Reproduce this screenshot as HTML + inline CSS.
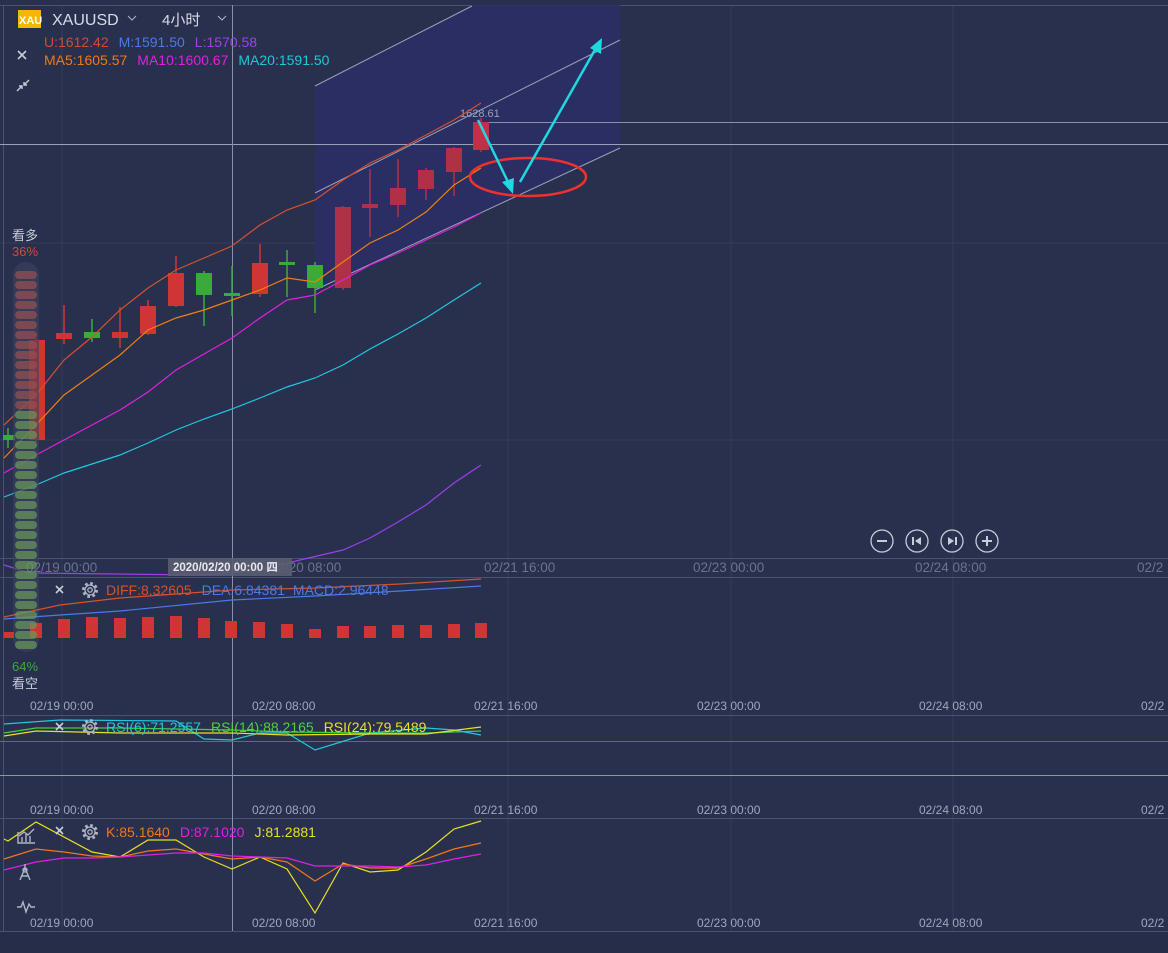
<!DOCTYPE html>
<html><head><meta charset="utf-8"><style>
html,body{margin:0;padding:0;background:#28304e;}
body{width:1168px;height:953px;overflow:hidden;position:relative;font-family:"Liberation Sans","Noto Sans CJK SC",sans-serif;}
svg{position:absolute;left:0;top:0}
text{font-family:"Liberation Sans","Noto Sans CJK SC",sans-serif;}
</style></head><body>
<svg width="1168" height="953" viewBox="0 0 1168 953">
<defs>
<g id="gear"><circle r="6.5" fill="none" stroke="#b0b4c4" stroke-width="3" stroke-dasharray="2.6 2.5"/><circle r="5" fill="none" stroke="#b0b4c4" stroke-width="1.3"/><circle r="2.2" fill="none" stroke="#b0b4c4" stroke-width="1.3"/></g>
</defs>
<rect x="0" y="0" width="1168" height="953" fill="#28304e"/>
<rect x="0" y="931" width="1168" height="22" fill="#262d48"/>
<g stroke="#333b5a" stroke-width="1">
<line x1="62" y1="5" x2="62" y2="931"/><line x1="508" y1="5" x2="508" y2="931"/>
<line x1="731" y1="5" x2="731" y2="931"/><line x1="953" y1="5" x2="953" y2="931"/>
<line x1="0" y1="243" x2="1168" y2="243"/><line x1="0" y1="440" x2="1168" y2="440"/>
</g>
<g stroke="#4a5270" stroke-width="1">
<line x1="0" y1="5.5" x2="1168" y2="5.5"/>
<line x1="0" y1="558.5" x2="1168" y2="558.5"/>
<line x1="0" y1="577.5" x2="1168" y2="577.5"/>
<line x1="0" y1="715.5" x2="1168" y2="715.5"/>
<line x1="0" y1="818.5" x2="1168" y2="818.5"/>
<line x1="0" y1="931.5" x2="1168" y2="931.5"/>
<line x1="3.5" y1="5" x2="3.5" y2="931"/>
</g>
<polygon points="315,86 315,290 620,148 620,5 472,5" fill="#2a2f66" opacity="0.9"/>
<g stroke="#9aa0b8" stroke-width="1" fill="none">
<line x1="315" y1="86" x2="472" y2="6"/>
<line x1="315" y1="193" x2="620" y2="40"/>
<line x1="315" y1="290" x2="620" y2="148"/>
</g>
<line x1="480" y1="122.5" x2="1168" y2="122.5" stroke="#8a90a8"/>
<line x1="0" y1="144.5" x2="1168" y2="144.5" stroke="#9aa0b8"/>
<line x1="232.5" y1="5" x2="232.5" y2="931" stroke="#8a90a8"/>
<g stroke-width="1.5">
<line x1="8" y1="428" x2="8" y2="448" stroke="#3aaa3a"/><rect x="3" y="435" width="12" height="5" fill="#3aaa3a"/>
<line x1="36" y1="338" x2="36" y2="442" stroke="#d03535"/><rect x="29" y="340" width="16" height="100" fill="#d03535"/>
<line x1="64" y1="305" x2="64" y2="344" stroke="#d03535"/><rect x="56" y="333" width="16" height="6" fill="#d03535"/>
<line x1="92" y1="319" x2="92" y2="342" stroke="#3aaa3a"/><rect x="84" y="332" width="16" height="6" fill="#3aaa3a"/>
<line x1="120" y1="307" x2="120" y2="348" stroke="#d03535"/><rect x="112" y="332" width="16" height="6" fill="#d03535"/>
<line x1="148" y1="300" x2="148" y2="335" stroke="#d03535"/><rect x="140" y="306" width="16" height="28" fill="#d03535"/>
<line x1="176" y1="256" x2="176" y2="307" stroke="#d03535"/><rect x="168" y="273" width="16" height="33" fill="#d03535"/>
<line x1="204" y1="271" x2="204" y2="326" stroke="#3aaa3a"/><rect x="196" y="273" width="16" height="22" fill="#3aaa3a"/>
<line x1="232" y1="266" x2="232" y2="316" stroke="#3aaa3a"/><rect x="224" y="293" width="16" height="3" fill="#3aaa3a"/>
<line x1="260" y1="244" x2="260" y2="297" stroke="#d03535"/><rect x="252" y="263" width="16" height="31" fill="#d03535"/>
<line x1="287" y1="250" x2="287" y2="297" stroke="#3aaa3a"/><rect x="279" y="262" width="16" height="3" fill="#3aaa3a"/>
<line x1="315" y1="262" x2="315" y2="313" stroke="#3aaa3a"/><rect x="307" y="265" width="16" height="23" fill="#3aaa3a"/>
<line x1="343" y1="206" x2="343" y2="290" stroke="#b03048"/><rect x="335" y="207" width="16" height="81" fill="#b03048"/>
<line x1="370" y1="169" x2="370" y2="237" stroke="#b03048"/><rect x="362" y="204" width="16" height="4" fill="#b03048"/>
<line x1="398" y1="159" x2="398" y2="217" stroke="#b03048"/><rect x="390" y="188" width="16" height="17" fill="#b03048"/>
<line x1="426" y1="168" x2="426" y2="200" stroke="#b03048"/><rect x="418" y="170" width="16" height="19" fill="#b03048"/>
<line x1="454" y1="147" x2="454" y2="196" stroke="#b03048"/><rect x="446" y="148" width="16" height="24" fill="#b03048"/>
<line x1="481" y1="118" x2="481" y2="152" stroke="#b03048"/><rect x="473" y="122" width="16" height="28" fill="#c0304a"/>
</g>
<text x="460" y="117" font-size="11" fill="#9aa0b4">1628.61</text>
<g fill="none" stroke-width="1.2">
<polyline stroke="#d8502c" points="4,425 36,395 64,360 92,337 120,310 148,288 176,270 204,258 232,246 260,225 287,210 315,200 343,180 370,163 398,150 426,135 454,120 481,103"/>
<polyline stroke="#f08010" points="4,458 36,425 64,395 92,375 120,355 148,330 176,318 204,310 232,300 260,290 287,278 315,282 343,262 370,243 398,230 426,212 454,185 481,168"/>
<polyline stroke="#e020e0" points="4,473 36,455 64,440 92,425 120,410 148,392 176,370 204,354 232,338 260,318 287,300 315,295 343,280 370,265 398,253 426,240 454,227 481,213"/>
<polyline stroke="#20c8e0" points="4,497 36,485 64,473 92,464 120,455 148,443 176,430 204,419 232,409 260,398 287,387 315,378 343,365 370,349 398,334 426,318 454,300 481,283"/>
<polyline stroke="#9a40e8" points="4,565 30,573 200,575 260,570 300,560 343,550 370,538 398,522 426,505 454,483 481,465"/>
</g>
<ellipse cx="528" cy="177" rx="58" ry="19" fill="none" stroke="#f03030" stroke-width="2.5"/>
<g stroke="#20d8e0" stroke-width="2.5" fill="#20d8e0">
<line x1="478" y1="120" x2="509" y2="184"/>
<polygon points="513,194 502,182 514,178" stroke="none"/>
<line x1="520" y1="182" x2="596" y2="48"/>
<polygon points="602,38 601,54 590,48" stroke="none"/>
</g>
<rect x="18" y="10" width="23" height="18" fill="#f5b800"/>
<text x="19" y="24" font-size="11" fill="#fff" font-weight="bold">XAU</text>
<text x="52" y="25" font-size="16" fill="#d8dbe6">XAUUSD</text>
<path d="M128 16 l4 4 l4 -4" stroke="#b0b4c4" fill="none"/>
<text x="162" y="25" font-size="15" fill="#d8dbe6">4小时</text>
<path d="M218 16 l4 4 l4 -4" stroke="#b0b4c4" fill="none"/>
<text x="44" y="47" font-size="14"><tspan fill="#d04a3a">U:1612.42</tspan><tspan dx="10" fill="#4a7ae8">M:1591.50</tspan><tspan dx="10" fill="#a040e8">L:1570.58</tspan></text>
<text x="44" y="65" font-size="14"><tspan fill="#f07818">MA5:1605.57</tspan><tspan dx="10" fill="#e020e0">MA10:1600.67</tspan><tspan dx="10" fill="#20c8d8">MA20:1591.50</tspan></text>
<path d="M18 51 l8 8 M26 51 l-8 8" stroke="#c8ccd8" stroke-width="1.6"/>
<path d="M17 91 l5 -5 M19 86 h3 v3 M29 80 l-5 5 M27 85 h-3 v-3" stroke="#c8ccd8" stroke-width="1.4" fill="none"/>
<text x="12" y="240" font-size="13" fill="#c8ccd8">看多</text>
<text x="12" y="256" font-size="13" fill="#d04a3a">36%</text>
<rect x="13" y="262" width="26" height="390" rx="13" fill="#3a4260" opacity="0.6"/>
<text x="12" y="671" font-size="13" fill="#3aaa3a">64%</text>
<text x="12" y="688" font-size="13" fill="#c8ccd8">看空</text>
<g font-size="13.5" fill="#6a7290">
<text x="26" y="572">02/19 00:00</text><text x="270" y="572">02/20 08:00</text>
<text x="484" y="572">02/21 16:00</text><text x="693" y="572">02/23 00:00</text>
<text x="915" y="572">02/24 08:00</text><text x="1137" y="572">02/2</text>
</g>
<rect x="168" y="558" width="124" height="18" fill="#5a5e72" opacity="0.9"/>
<text x="173" y="571" font-size="11.5" fill="#e8e8ee" font-weight="bold">2020/02/20 00:00 四</text>
<g stroke="#c8ccd8" stroke-width="1.3" fill="none">
<circle cx="882" cy="541" r="11"/><circle cx="917" cy="541" r="11"/><circle cx="952" cy="541" r="11"/><circle cx="987" cy="541" r="11"/>
<line x1="877" y1="541" x2="887" y2="541" stroke-width="2"/>
<line x1="982" y1="541" x2="992" y2="541" stroke-width="2"/><line x1="987" y1="536" x2="987" y2="546" stroke-width="2"/>
<line x1="913" y1="537" x2="913" y2="545" stroke-width="2"/>
<line x1="956" y1="537" x2="956" y2="545" stroke-width="2"/>
</g>
<polygon points="921,537 921,545 915,541" fill="#c8ccd8"/>
<polygon points="948,537 948,545 954,541" fill="#c8ccd8"/>
<polyline fill="none" stroke="#d8502c" stroke-width="1.2" points="4,617 60,605 120,598 232,590 315,588 400,584 481,579"/>
<polyline fill="none" stroke="#4a7ae8" stroke-width="1.2" points="4,619 60,615 120,611 232,600 315,596 400,591 481,586"/>
<g fill="#d03535">
<rect x="4" y="632" width="10" height="6"/><rect x="30" y="623" width="12" height="15"/><rect x="58" y="619" width="12" height="19"/><rect x="86" y="617" width="12" height="21"/><rect x="114" y="618" width="12" height="20"/><rect x="142" y="617" width="12" height="21"/><rect x="170" y="616" width="12" height="22"/><rect x="198" y="618" width="12" height="20"/><rect x="225" y="621" width="12" height="17"/><rect x="253" y="622" width="12" height="16"/><rect x="281" y="624" width="12" height="14"/><rect x="309" y="629" width="12" height="9"/><rect x="337" y="626" width="12" height="12"/><rect x="364" y="626" width="12" height="12"/><rect x="392" y="625" width="12" height="13"/><rect x="420" y="625" width="12" height="13"/><rect x="448" y="624" width="12" height="14"/><rect x="475" y="623" width="12" height="15"/>
</g>
<path d="M56 586 l7 7 M63 586 l-7 7" stroke="#c8ccd8" stroke-width="1.6"/>
<use href="#gear" x="90" y="590"/>
<text x="106" y="595" font-size="14"><tspan fill="#d8502c">DIFF:8.32605</tspan><tspan dx="10" fill="#4a7ae8">DEA:6.84381</tspan><tspan dx="8" fill="#4a7ae8">MACD:2.96448</tspan></text>
<g font-size="12" fill="#a0a6ba">
<text x="30" y="710">02/19 00:00</text><text x="252" y="710">02/20 08:00</text><text x="474" y="710">02/21 16:00</text><text x="697" y="710">02/23 00:00</text><text x="919" y="710">02/24 08:00</text><text x="1141" y="710">02/2</text>
<text x="30" y="814">02/19 00:00</text><text x="252" y="814">02/20 08:00</text><text x="474" y="814">02/21 16:00</text><text x="697" y="814">02/23 00:00</text><text x="919" y="814">02/24 08:00</text><text x="1141" y="814">02/2</text>
<text x="30" y="927">02/19 00:00</text><text x="252" y="927">02/20 08:00</text><text x="474" y="927">02/21 16:00</text><text x="697" y="927">02/23 00:00</text><text x="919" y="927">02/24 08:00</text><text x="1141" y="927">02/2</text>
</g>
<line x1="0" y1="741.5" x2="1168" y2="741.5" stroke="#a05060"/>
<line x1="0" y1="775.5" x2="1168" y2="775.5" stroke="#8a9aa0"/>
<g fill="none" stroke-width="1.2">
<polyline stroke="#20c8e0" points="4,724 60,720 176,721 204,739 232,740 260,733 287,733 315,750 370,733 426,728 454,730 481,735"/>
<polyline stroke="#40d040" points="4,733 36,728 120,728 232,730 287,732 370,733 426,733 481,731"/>
<polyline stroke="#e8e020" points="4,736 36,731 120,733 232,733 287,735 370,734 426,734 481,727"/>
</g>
<path d="M56 723 l7 7 M63 723 l-7 7" stroke="#c8ccd8" stroke-width="1.6"/>
<use href="#gear" x="90" y="727"/>
<text x="106" y="732" font-size="14"><tspan fill="#20c8e0">RSI(6):71.2557</tspan><tspan dx="10" fill="#50d040">RSI(14):88.2165</tspan><tspan dx="10" fill="#e8e020">RSI(24):79.5489</tspan></text>
<g fill="none" stroke-width="1.2">
<polyline stroke="#e8e020" points="4,839 8,841 36,822 92,852 120,857 148,840 176,840 204,857 232,869 260,857 287,869 315,913 343,863 370,872 398,870 426,852 454,829 481,821"/>
<polyline stroke="#f07818" points="4,859 36,849 64,852 92,856 120,857 148,851 176,849 204,854 232,859 260,857 287,862 315,881 343,864 370,868 398,868 426,859 454,849 481,843"/>
<polyline stroke="#e020e0" points="4,870 36,862 64,858 92,858 120,857 148,855 176,853 204,853 232,856 260,857 287,858 315,866 343,866 370,866 398,867 426,865 454,859 481,854"/>
</g>
<path d="M56 827 l7 7 M63 827 l-7 7" stroke="#c8ccd8" stroke-width="1.6"/>
<use href="#gear" x="90" y="832"/>
<text x="106" y="837" font-size="14"><tspan fill="#f07818">K:85.1640</tspan><tspan dx="10" fill="#e020e0">D:87.1020</tspan><tspan dx="10" fill="#e8e020">J:81.2881</tspan></text>
<g stroke="#b0b4c4" stroke-width="1.4" fill="none">
<path d="M18 832 v11 h17 M22 842 v-5 M26 842 v-8 M30 842 v-6 M19 836 l5 -4 l4 3 l6 -6"/>
<path d="M25 864 v4 M25 868 l-5 12 M25 868 l5 12 M21 876 h8"/><circle cx="25" cy="870" r="2"/>
<path d="M17 907 h4 l2 -5 l3 10 l3 -8 l2 3 h4"/>
</g>
</svg>
<svg width="60" height="700" viewBox="0 0 60 700" style="left:0;top:0">
<g opacity="0.7">
<rect x="15" y="271" width="22" height="8" rx="4" fill="#9a5050"/><rect x="15" y="281" width="22" height="8" rx="4" fill="#9a5050"/><rect x="15" y="291" width="22" height="8" rx="4" fill="#9a5050"/><rect x="15" y="301" width="22" height="8" rx="4" fill="#9a5050"/><rect x="15" y="311" width="22" height="8" rx="4" fill="#9a5050"/><rect x="15" y="321" width="22" height="8" rx="4" fill="#9a5050"/><rect x="15" y="331" width="22" height="8" rx="4" fill="#9a5050"/><rect x="15" y="341" width="22" height="8" rx="4" fill="#9a5050"/><rect x="15" y="351" width="22" height="8" rx="4" fill="#9a5050"/><rect x="15" y="361" width="22" height="8" rx="4" fill="#9a5050"/><rect x="15" y="371" width="22" height="8" rx="4" fill="#9a5050"/><rect x="15" y="381" width="22" height="8" rx="4" fill="#9a5050"/><rect x="15" y="391" width="22" height="8" rx="4" fill="#9a5050"/><rect x="15" y="401" width="22" height="8" rx="4" fill="#9a5050"/>
<rect x="15" y="411" width="22" height="8" rx="4" fill="#6a9a5a"/><rect x="15" y="421" width="22" height="8" rx="4" fill="#6a9a5a"/><rect x="15" y="431" width="22" height="8" rx="4" fill="#6a9a5a"/><rect x="15" y="441" width="22" height="8" rx="4" fill="#6a9a5a"/><rect x="15" y="451" width="22" height="8" rx="4" fill="#6a9a5a"/><rect x="15" y="461" width="22" height="8" rx="4" fill="#6a9a5a"/><rect x="15" y="471" width="22" height="8" rx="4" fill="#6a9a5a"/><rect x="15" y="481" width="22" height="8" rx="4" fill="#6a9a5a"/><rect x="15" y="491" width="22" height="8" rx="4" fill="#6a9a5a"/><rect x="15" y="501" width="22" height="8" rx="4" fill="#6a9a5a"/><rect x="15" y="511" width="22" height="8" rx="4" fill="#6a9a5a"/><rect x="15" y="521" width="22" height="8" rx="4" fill="#6a9a5a"/><rect x="15" y="531" width="22" height="8" rx="4" fill="#6a9a5a"/><rect x="15" y="541" width="22" height="8" rx="4" fill="#6a9a5a"/><rect x="15" y="551" width="22" height="8" rx="4" fill="#6a9a5a"/><rect x="15" y="561" width="22" height="8" rx="4" fill="#6a9a5a"/><rect x="15" y="571" width="22" height="8" rx="4" fill="#6a9a5a"/><rect x="15" y="581" width="22" height="8" rx="4" fill="#6a9a5a"/><rect x="15" y="591" width="22" height="8" rx="4" fill="#6a9a5a"/><rect x="15" y="601" width="22" height="8" rx="4" fill="#6a9a5a"/><rect x="15" y="611" width="22" height="8" rx="4" fill="#6a9a5a"/><rect x="15" y="621" width="22" height="8" rx="4" fill="#6a9a5a"/><rect x="15" y="631" width="22" height="8" rx="4" fill="#6a9a5a"/><rect x="15" y="641" width="22" height="8" rx="4" fill="#6a9a5a"/>
</g>
</svg>
</body></html>
